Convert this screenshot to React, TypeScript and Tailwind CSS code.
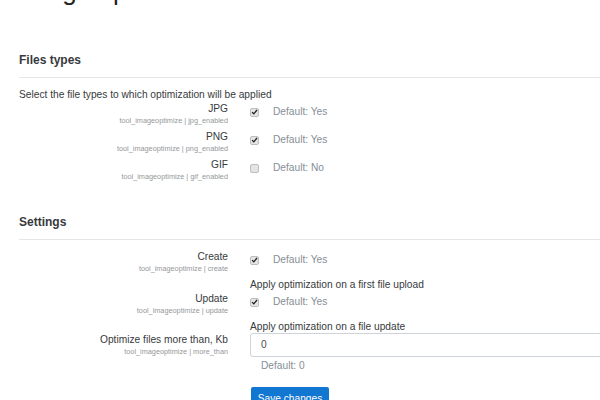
const Check = ({ on }: { on: boolean }) => (
  <span className="w-[9px] h-[9px] rounded-[2px] border border-[#bdbdbd] bg-[#e4e4e4] flex items-center justify-center shrink-0">
    {on && (
      <svg viewBox="0 0 10 10" className="w-[8px] h-[8px]">
        <path d="M1.5 5.2 L4 7.6 L8.6 2.2" fill="none" stroke="#222" strokeWidth="1.9" />
      </svg>
    )}
  </span>
);

const Label = ({ text, tag }: { text: string; tag: string }) => (
  <div className="w-[209px] shrink-0 text-right">
    <div className="text-[10.2px] leading-[14px] text-[#373a3c]">{text}</div>
    <div className="text-[7.3px] leading-[10px] text-[#94979a]">tool_imageoptimize | {tag}</div>
  </div>
);

const CheckField = ({ on, def }: { on: boolean; def: string }) => (
  <div className="flex items-center h-[14px]">
    <Check on={on} />
    <span className="ml-[14px] text-[10.2px] leading-[14px] text-[#868e96]">Default: {def}</span>
  </div>
);

export default function App() {
  const types = [
    { name: 'JPG', tag: 'jpg_enabled', on: true, def: 'Yes' },
    { name: 'PNG', tag: 'png_enabled', on: true, def: 'Yes' },
    { name: 'GIF', tag: 'gif_enabled', on: false, def: 'No' },
  ];

  return (
    <div className="w-[600px] h-[400px] overflow-hidden bg-white font-['Liberation_Sans',Arial,sans-serif] text-[#373a3c]">
      <div className="w-[900px] pl-[19px]">
        <h2 className="text-[26px] leading-[26px] -mt-[22px] text-[#222] whitespace-nowrap">Image optimize</h2>

        <h3 className="mt-[46px] text-[12px] leading-[20px] font-bold">Files types</h3>
        <div className="mt-[7px] h-px bg-[#e6e6e6]" />
        <p className="mt-[10px] text-[10.2px] leading-[14px]">Select the file types to which optimization will be applied</p>
        {types.map((t) => (
          <div key={t.name} className="flex h-[28px]">
            <Label text={t.name} tag={t.tag} />
            <div className="ml-[22px] pt-[3px]">
              <CheckField on={t.on} def={t.def} />
            </div>
          </div>
        ))}

        <h3 className="mt-[26px] text-[12px] leading-[20px] font-bold">Settings</h3>
        <div className="mt-[7px] h-px bg-[#e6e6e6]" />

        <div className="flex mt-[10px]">
          <Label text="Create" tag="create" />
          <div className="ml-[22px] pt-[3px]">
            <CheckField on={true} def="Yes" />
            <div className="mt-[11px] text-[10.2px] leading-[14px]">Apply optimization on a first file upload</div>
          </div>
        </div>

        <div className="flex">
          <Label text="Update" tag="update" />
          <div className="ml-[22px] pt-[3px]">
            <CheckField on={true} def="Yes" />
            <div className="mt-[11px] text-[10.2px] leading-[14px]">Apply optimization on a file update</div>
          </div>
        </div>

        <div className="flex -mt-[1px]">
          <Label text="Optimize files more than, Kb" tag="more_than" />
          <div className="ml-[22px] flex-1">
            <div className="h-[24px] border border-[#ced4da] rounded-[3px] flex items-center pl-[10px] text-[10.2px] text-[#495057]">0</div>
            <div className="mt-[2px] ml-[11px] text-[10.2px] leading-[14px] text-[#868e96]">Default: 0</div>
            <button className="mt-[14px] ml-[1px] w-[78px] h-[24px] bg-[#1177d1] text-white text-[10.2px] leading-[14px] rounded-[2px]">Save changes</button>
          </div>
        </div>
      </div>
    </div>
  );
}
